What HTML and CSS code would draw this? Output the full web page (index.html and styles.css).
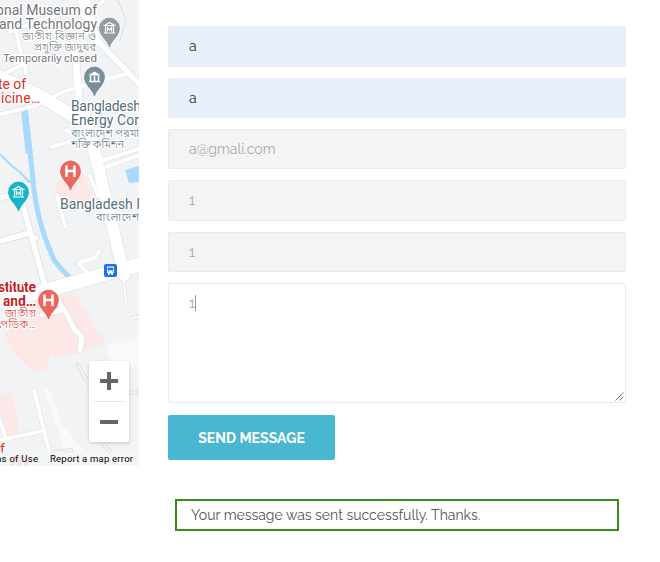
FILE: index.html
```
<!DOCTYPE html>
<html lang="en">
<head>
<meta charset="utf-8">
<title>Contact</title>
<link rel="stylesheet" href="styles.css">
</head>
<body>
<main class="contact">
<section class="map">
<svg class="map-canvas" viewBox="0 0 139 466" width="139" height="466">
  <rect width="139" height="466" fill="#f1f3f4"/>
  <path d="M107 346L139 335V466H70L44 388L51 391L61 423L85 452H139V370L108 361Z" fill="#f8f9fb"/>
  <g fill="#fce8e6">
    <path d="M56 182L84 174L92 199L91 206L58 209Z"/>
    <path d="M93 177L98 176L103 196L97 194Z"/>
    <path d="M36 300L74 292L106 344L60 358L51 354L46 369L34 373L13 352L4 335L14 327Z"/>
    <path d="M0 395L11 391L20 433L4 437L0 425Z"/>
  </g>
  <g fill="none" stroke="#a8dafc">
    <path d="M24 106C28 132 31 160 34 190C39 226 47 243 54 260C60 268 65 273 70 278" stroke-width="5"/>
    <path d="M24 106L29 153" stroke-width="7"/>
    <path d="M0 154L12 166L20 172L29 182L34 180" stroke-width="2"/>
  </g>
  <path d="M125 170L139 166V182L129 183Z" fill="#a8dafc"/>
  <g class="roads road-edges">
    <path d="M80-4L86 20M75 50L80 110" stroke-width="8"/>
    <path d="M84 115L94 150L113 228L124 275" stroke-width="13"/>
    <path d="M116-4L126 20L120 40" stroke-width="1"/>
    <path d="M-3 303L62 286L142 264" stroke-width="15"/>
    <path d="M-3 76L42 97L78 119" stroke-width="14"/>
    <path d="M-3 115L35 106L65 91L129 73" stroke-width="5"/>
    <path d="M10 32L40 20L58 16M15 28L26 73M-3 77L22 65M80 25L108-4M66 130L90 145" stroke-width="5"/>
    <path d="M87 0L97 40L139 84" stroke-width="7"/>
    <path d="M51 147L72 141M106 167L142 154M104 160L142 148M90 176L98 196M57 195L65 227M67 209L101 202" stroke-width="5"/>
    <path d="M-3 199L21 192M21 198L45 286M32 240L36 238M-3 242L30 233" stroke-width="7"/>
    <path d="M86 271L79 264L81 262L96 257L99 251" stroke-width="5"/>
    <path d="M53 294L65 311L74 329L82 337L80 350M42 315L62 310" stroke-width="6"/>
    <path d="M124 279L126 303M142 316L132 318L130 322" stroke-width="3"/>
    <path d="M34 390L51 459M0 440L43 431M-2 415L6 438" stroke-width="5"/>
    <path d="M78 365L92 389V430L111 453M125 394L142 391M127 420V443M51 453L71 450L74 460" stroke-width="4"/>
  </g>
  <g class="roads road-faces">
    <path d="M80-4L86 20M75 50L80 110" stroke-width="7"/>
    <path d="M84 115L94 150L113 228L124 275" stroke-width="12"/>
    <path d="M-3 303L62 286L142 264" stroke-width="14"/>
    <path d="M-3 76L42 97L78 119" stroke-width="13"/>
    <path d="M-3 115L35 106L65 91L129 73" stroke-width="4"/>
    <path d="M10 32L40 20L58 16M15 28L26 73M-3 77L22 65M80 25L108-4M66 130L90 145" stroke-width="4"/>
    <path d="M87 0L97 40L139 84" stroke-width="6"/>
    <path d="M51 147L72 141M106 167L142 154M104 160L142 148M90 176L98 196M57 195L65 227M67 209L101 202" stroke-width="4"/>
    <path d="M-3 199L21 192M21 198L45 286M32 240L36 238M-3 242L30 233" stroke-width="5.5"/>
    <path d="M86 271L79 264L81 262L96 257L99 251" stroke-width="4"/>
    <path d="M53 294L65 311L74 329L82 337L80 350M42 315L62 310" stroke-width="5"/>
    <path d="M124 279L126 303M142 316L132 318L130 322" stroke-width="2"/>
    <path d="M34 390L51 459M0 440L43 431M-2 415L6 438" stroke-width="4"/>
    <path class="faint" d="M78 365L92 389V430L111 453M125 394L142 391M127 420V443M51 453L71 450L74 460" stroke-width="2.5"/>
  </g>
  <g class="labels">
    <text x="-4" y="15" textLength="101">onal Museum of</text>
    <text x="-1" y="28.5" textLength="98">and Technology</text>
    <text class="bn" x="22" y="39.5" textLength="74">জাতীয় বিজ্ঞান ও</text>
    <text class="bn" x="34" y="50.5" textLength="62">প্রযুক্তি জাদুঘর</text>
    <text class="small" x="3" y="62" textLength="94">Temporarily closed</text>
    <g class="energy">
      <text x="71" y="111" textLength="70">Bangladesh</text>
      <text x="71" y="125" textLength="68">Energy Cor</text>
      <text class="bn" x="71" y="137" textLength="68">বাংলাদেশ পরমা</text>
      <text class="bn" x="71" y="147.5" textLength="53">শক্তি কমিশন</text>
      <text x="60" y="209" textLength="80">Bangladesh I</text>
      <text class="bn" x="96" y="220.5" textLength="43">বাংলাদেশ</text>
    </g>
    <g class="hospital">
      <text x="-2" y="89" textLength="28">te of</text>
      <text x="1" y="102.5" textLength="39">icine…</text>
      <text class="strong" x="-2" y="292" textLength="38">stitute</text>
      <text class="strong" x="3" y="305.5" textLength="33">and…</text>
      <text class="bn" x="5" y="317" textLength="31">জাতীয়</text>
      <text class="bn" x="-3" y="328" textLength="39">পেডিক…</text>
      <text x="0" y="454">f</text>
    </g>
  </g>
  <g fill="none" stroke="#fff">
    <g transform="translate(109.500 28)">
      <path class="pin gray" d="M0 19C-2 12-10 8-10 0A10 10 0 1 1 10 0C10 8 2 12 0 19Z"/>
      <path d="M-5-2.500L0-5.500L5-2.500ZM-4-2V4.500M4-2V4.500M-5.500 5H5.500M-2 3.500V-.5L0 2L2-.5V3.500" stroke-width="1.200"/>
    </g>
    <g transform="translate(94.500 77)">
      <path class="pin slate" d="M0 19C-2 12-10 8-10 0A10 10 0 1 1 10 0C10 8 2 12 0 19Z"/>
      <path d="M-5-2L0-5L5-2Z" fill="#fff"/><path d="M-4-1V4M0-1V4M4-1V4M-5.500 4.500H5.500" stroke-width="1.500"/>
    </g>
    <g transform="translate(70.500 171)">
      <path class="pin red" d="M0 19C-2 12-10 8-10 0A10 10 0 1 1 10 0C10 8 2 12 0 19Z"/>
      <path d="M-4-5.500V6M4-5.500V6M-4 0H4" stroke-width="2.400"/>
    </g>
    <g transform="translate(18.500 192)">
      <path class="pin teal" d="M0 19C-2 12-10 8-10 0A10 10 0 1 1 10 0C10 8 2 12 0 19Z"/>
      <path d="M-5-2.500L0-5.500L5-2.500ZM-4-2V4.500M4-2V4.500M-5.500 5H5.500M-2 3.500V-.5L0 2L2-.5V3.500" stroke-width="1.200"/>
    </g>
    <g transform="translate(48.500 300)">
      <path class="pin red" d="M0 19C-2 12-10 8-10 0A10 10 0 1 1 10 0C10 8 2 12 0 19Z"/>
      <path d="M-4-5.500V6M4-5.500V6M-4 0H4" stroke-width="2.400"/>
    </g>
  </g>
  <g>
    <rect x="104" y="264" width="13" height="13" rx="2" fill="#1a73e8"/>
    <path d="M107 266.500H114V273H113V275H111.500V273.500H109.500V275H108V273H107Z" fill="#fff"/>
    <path d="M108 268H113V270H108ZM108 271.500H109M112 271.500H113" fill="#1a73e8" stroke="#1a73e8" stroke-width=".7"/>
  </g>
  <circle cx="19" cy="464" r="9" fill="#ee675c" opacity=".4"/>
  <path d="M15.500 459V466M22.500 459V466" stroke="#fff" stroke-width="2"/>
  <rect y="452" width="139" height="14" fill="#f5f5f5" opacity=".7"/>
  <g class="legal">
    <text x="-7" y="462" textLength="45">ms of Use</text>
    <text x="50" y="462" textLength="83">Report a map error</text>
  </g>
</svg>
<div class="zoom-control">
  <button class="zoom-button" aria-label="Zoom in"><svg width="18" height="18"><path d="M9 0V18M0 9H18"/></svg></button>
  <button class="zoom-button" aria-label="Zoom out"><svg width="18" height="18"><path d="M0 9H18"/></svg></button>
</div>
</section>
<form class="form">
  <div class="fields">
    <div class="field filled">a</div>
    <div class="field filled">a</div>
    <div class="field"><span class="email">a@gmali.com</span></div>
    <div class="field">1</div>
    <div class="field">1</div>
    <div class="field message">1<span class="caret"></span>
      <svg class="grip" width="9" height="9"><path d="M.5 8.500L8.500 .5M4.500 8.500L8.500 4.500"/></svg>
    </div>
  </div>
  <button class="send" type="button"><span>SEND MESSAGE</span></button>
  <p class="notice">Your message was sent successfully. Thanks.</p>
</form>
</main>
</body>
</html>
```
FILE: styles.css
```
* { box-sizing: border-box; }
body { margin: 0; background: #fff; overflow: hidden; font: 14px/20px Raleway, Lato, sans-serif; }
button { border: 0; padding: 0; font: inherit; }
.contact { display: flex; height: 562px; }
.map { position: relative; width: 139px; height: 466px; flex: none; overflow: hidden; }
.map-canvas { display: block; }
.roads { fill: none; stroke-linecap: round; stroke-linejoin: round; }
.road-edges { stroke: #d9dce1; }
.road-faces { stroke: #fff; }
.faint { stroke: #f1f3f4; }
.labels { font: 14px Roboto, "Noto Sans Bengali", sans-serif; fill: #70757a; stroke: #fff; stroke-width: 2.5px; stroke-linejoin: round; paint-order: stroke; }
.labels .bn { font-size: 11px; font-weight: 300; }
.labels .small { font-size: 11.5px; }
.energy { fill: #546e7a; }
.hospital { fill: #d93025; }
.strong { font-weight: 700; fill: #c5221f; }
.pin { stroke-width: .6px; }
.gray { fill: #969ba1; stroke: #858a90; }
.slate { fill: #78909c; stroke: #607d8b; }
.red { fill: #ee675c; stroke: #d94b40; }
.teal { fill: #12b5cb; stroke: #0097a7; }
.legal { font: 9.5px Roboto, sans-serif; fill: #000; }
.zoom-control { position: absolute; left: 89px; top: 361px; width: 40px; height: 81px; display: grid; grid-template-rows: 40px 41px; background: #fff; border-radius: 2px; box-shadow: 0 1px 4px -1px rgba(0,0,0,.3); }
.zoom-button { display: grid; place-items: center; background: none; }
.zoom-button + .zoom-button { margin: 0 5px; border-top: 1px solid #e6e6e6; }
.zoom-button svg { fill: none; stroke: #666; stroke-width: 4px; }
.form { margin: 26px 0 0 29px; width: 458px; }
.fields { display: grid; grid-template-rows: 41px 40px 40px 41px 40px 120px; row-gap: 11px; }
.field { display: flex; align-items: flex-start; padding: 9px 20px 0; color: #aaa; background: #f4f4f4; border: 1px solid #ebebeb; border-radius: 2px; }
.filled { color: #333; background: #e8f0fe; }
.email { letter-spacing: 0; }
.message { position: relative; background: #fff; }
.caret { width: 1px; height: 16px; margin-top: 2px; background: #999; }
.grip { position: absolute; right: 1px; bottom: 1px; fill: none; stroke: #555; stroke-width: .8px; }
.send { display: block; width: 167px; height: 45px; margin-top: 12px; color: #fff; background: #4ab7d0; border-radius: 2px; font-weight: 700; letter-spacing: .05px; }
.notice { margin: 39px 7px 0; height: 32px; padding: 4px 14px; border: 2px solid #398f14; color: #555; }
```
